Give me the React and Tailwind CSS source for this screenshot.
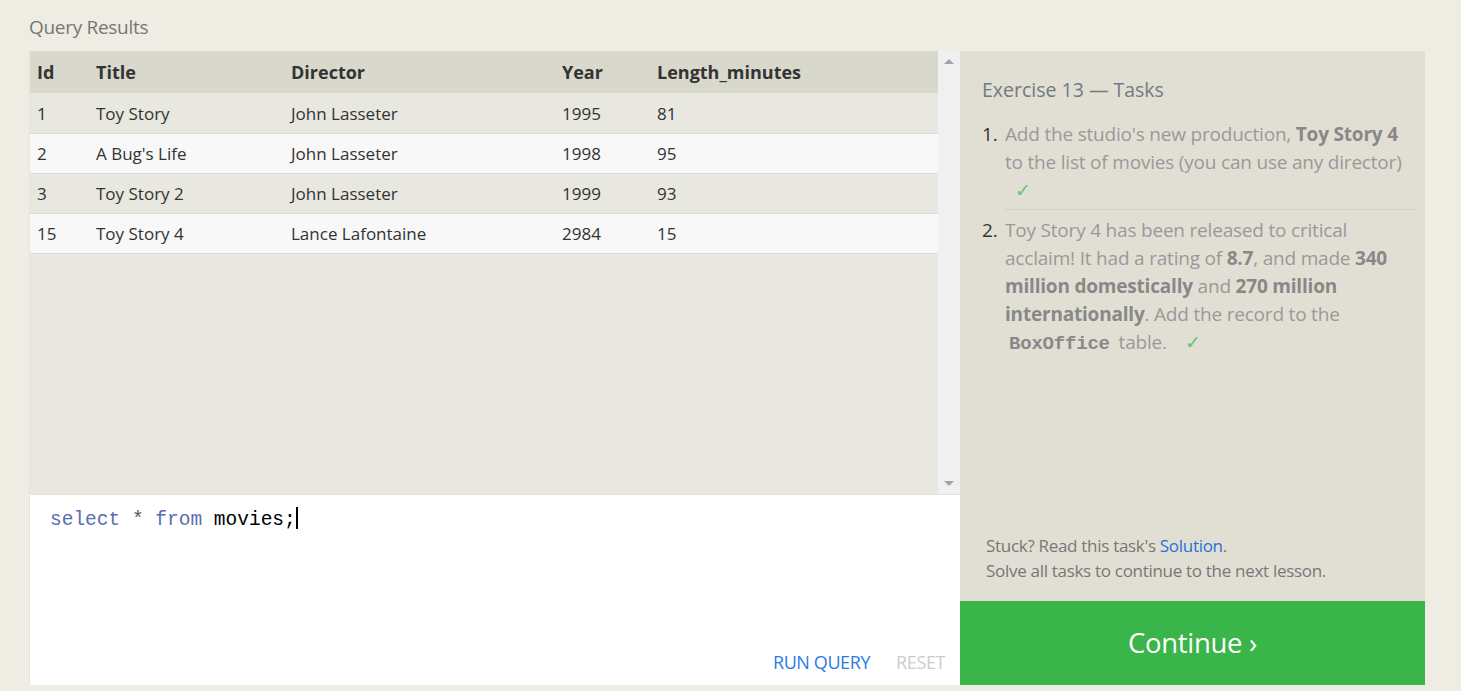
import React from 'react';

const rows = [
  { id: 1, title: 'Toy Story', director: 'John Lasseter', year: 1995, length: 81 },
  { id: 2, title: "A Bug's Life", director: 'John Lasseter', year: 1998, length: 95 },
  { id: 3, title: 'Toy Story 2', director: 'John Lasseter', year: 1999, length: 93 },
  { id: 15, title: 'Toy Story 4', director: 'Lance Lafontaine', year: 2984, length: 15 },
];

function Check() {
  return <span className="text-[#6cc070]">✓</span>;
}

export default function App() {
  return (
    <div className="min-h-screen bg-[#efece4] font-['Open_Sans',sans-serif] px-[29px] pt-[13px]">
      <h2 className="text-[19px] leading-[28px] text-[#777] tracking-[-0.3px]">Query Results</h2>

      <div className="mt-[10px] flex h-[634px] w-[1396px]">
        {/* Left: results + editor */}
        <div className="w-[931px] flex flex-col border-l border-[#e6e4dc]">
          <div className="h-[443px] flex bg-[#e8e7e0]">
            <div className="flex-1">
              <table className="w-full text-[17px] text-[#333] border-collapse">
                <thead>
                  <tr className="bg-[#d9d8cc] h-[42px] text-left text-[18px]">
                    <th className="w-[58px] pl-[7px] font-bold">Id</th>
                    <th className="w-[195px] pl-[8px] font-bold">Title</th>
                    <th className="w-[271px] pl-[8px] font-bold">Director</th>
                    <th className="w-[95px] pl-[8px] font-bold">Year</th>
                    <th className="pl-[8px] font-bold">Length_minutes</th>
                  </tr>
                </thead>
                <tbody>
                  {rows.map((r, i) => (
                    <tr
                      key={r.id}
                      className={`h-[40px] border-b border-[#dcdcdc] ${i % 2 === 0 ? 'bg-[#e8e7e0]' : 'bg-[#f8f8f8]'}`}
                    >
                      <td className="pl-[7px] pt-[1px]">{r.id}</td>
                      <td className="pl-[8px] pt-[1px]">{r.title}</td>
                      <td className="pl-[8px] pt-[1px]">{r.director}</td>
                      <td className="pl-[8px] pt-[1px]">{r.year}</td>
                      <td className="pl-[8px] pt-[1px]">{r.length}</td>
                    </tr>
                  ))}
                </tbody>
              </table>
            </div>
            {/* scrollbar */}
            <div className="w-[22px] bg-[#f0f0f0] flex flex-col justify-between items-center py-[8px]">
              <span className="block w-0 h-0 border-x-[5px] border-x-transparent border-b-[5px] border-b-[#a3a3a3]"></span>
              <span className="block w-0 h-0 border-x-[5px] border-x-transparent border-t-[5px] border-t-[#a3a3a3]"></span>
            </div>
          </div>

          <div className="flex-1 bg-white flex flex-col border-t border-[#e4e2da]">
            <div className="flex-1 pl-[20px] pt-[11px] font-['Liberation_Mono',monospace] text-[19.5px] leading-[28px]">
              <span className="text-[#5a6db0]">select</span>
              <span className="text-[#555]"> * </span>
              <span className="text-[#5a6db0]">from</span>
              <span className="text-black"> movies;</span>
              <span className="inline-block w-[2px] h-[22px] bg-black align-[-4px]"></span>
            </div>
            <div className="flex justify-end gap-[26px] pr-[15px] pb-[9px] text-[18px] tracking-[-0.4px]">
              <button className="text-[#2c7be5]">RUN QUERY</button>
              <button className="text-[#cccccc]">RESET</button>
            </div>
          </div>
        </div>

        {/* Right: tasks */}
        <div className="w-[465px] flex flex-col">
          <div className="flex-1 bg-[#e1dfd4] pl-[22px] pr-[10px] pt-[25px] flex flex-col">
            <h3 className="text-[19.5px] leading-[28px] text-[#737a82]">Exercise 13 — Tasks</h3>
            <ol className="mt-[16px] text-[19px] leading-[28px] text-[#999] tracking-[-0.2px]">
              <li className="flex">
                <span className="text-[#333] w-[23px] shrink-0">1.</span>
                <span className="flex-1 pb-[5px] border-b border-[#d3d1c6]">
                  Add the studio's new production, <b className="text-[#888] font-bold">Toy Story 4</b> to the list of movies
                  (you can use any director)
                  <br />
                  <span className="ml-[10px]"><Check /></span>
                </span>
              </li>
              <li className="flex pt-[6px]">
                <span className="text-[#333] w-[23px] shrink-0">2.</span>
                <span className="flex-1">
                  Toy Story 4 has been released to critical acclaim! It had a rating of <b className="text-[#888]">8.7</b>, and
                  made <b className="text-[#888]">340 million domestically</b> and <b className="text-[#888]">270 million</b>{' '}
                  <b className="text-[#888]">internationally</b>. Add the record to the{' '}
                  <code className="font-['Liberation_Mono',monospace] font-bold text-[#888] px-[4px]">BoxOffice</code> table.
                  <span className="ml-[18px]"><Check /></span>
                </span>
              </li>
            </ol>
            <div className="mt-auto pb-[18px] pl-[4px] text-[17px] leading-[25px] text-[#777] tracking-[-0.3px]">
              <p>
                Stuck? Read this task's <a className="text-[#2a6fd6]">Solution</a>.
              </p>
              <p>Solve all tasks to continue to the next lesson.</p>
            </div>
          </div>
          <button className="h-[84px] bg-[#3ab54a] text-white text-[27.5px] tracking-[-0.3px]">Continue ›</button>
        </div>
      </div>
    </div>
  );
}
